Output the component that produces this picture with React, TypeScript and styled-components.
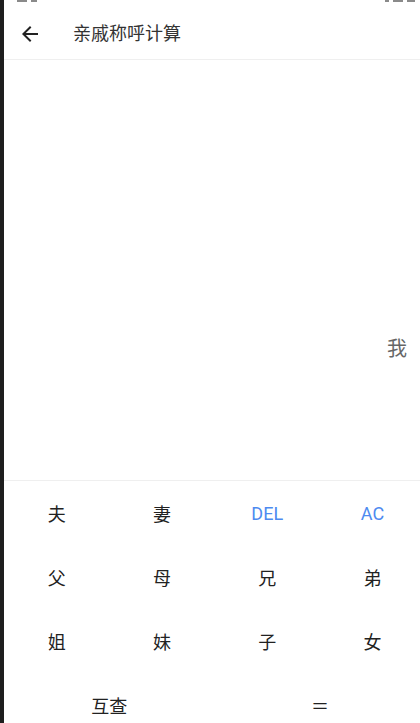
import React from "react";
import styled, { createGlobalStyle } from "styled-components";

const GlobalStyle = createGlobalStyle`
    html, body {
        margin: 0;
        padding: 0;
        background: #1e1e1e;
        overflow: hidden;
    }
    body {
        font-family: Roboto, "Noto Sans CJK SC", sans-serif;
    }
`;

const Shell = styled.div`
    display: flex;
    height: 723px;
    width: 420px;
    overflow: hidden;
`;

const Edge = styled.div`
    flex: 0 0 4px;
    background: #1e1e1e;
`;

const Screen = styled.div`
    flex: 1;
    display: flex;
    flex-direction: column;
    background: #fff;
    min-width: 0;
    overflow: hidden;
`;

const StatusBar = styled.div`
    flex-shrink: 0;
    height: 8px;
    display: flex;
    justify-content: space-between;
    align-items: flex-start;
    padding: 0 5px 0 13px;
`;

const StatusBits = styled.div`
    display: flex;
    gap: 4px;
`;

const Bit = styled.span<{ $w: number }>`
    display: block;
    width: ${(p) => p.$w}px;
    height: 2px;
    background: #8a8a8a;
`;

const Header = styled.div`
    flex-shrink: 0;
    height: 51px;
    display: flex;
    align-items: center;
    padding-left: 14px;
    border-bottom: 1px solid #efefef;
    color: #333;
`;

const BackButton = styled.button`
    width: 24px;
    height: 24px;
    padding: 0;
    border: none;
    background: none;
    display: flex;
    align-items: center;
    justify-content: center;
    color: #222;
`;

const Title = styled.h1`
    margin: 0 0 0 31px;
    font-size: 18px;
    font-weight: 400;
    line-height: 1;
    color: #333;
`;

const Display = styled.div`
    flex-shrink: 0;
    height: 421px;
    display: flex;
    flex-direction: column;
    justify-content: flex-end;
    align-items: flex-end;
    padding: 0 13px 119px 0;
    box-sizing: border-box;
    border-bottom: 1px solid #efefef;
`;

const Result = styled.div`
    font-size: 20px;
    line-height: 24px;
    color: #666;
`;

const Keypad = styled.div`
    flex-shrink: 0;
    display: grid;
    grid-template-columns: repeat(4, 105.3px);
    grid-auto-rows: 64px;
`;

const Key = styled.button<{ $accent?: boolean; $span?: number }>`
    grid-column: span ${(p) => p.$span ?? 1};
    border: none;
    background: none;
    padding: 0;
    font-family: Roboto, "Noto Sans CJK SC", sans-serif;
    font-size: 18px;
    color: ${(p) => (p.$accent ? "#4d8af0" : "#222")};
    display: flex;
    align-items: center;
    justify-content: center;
`;

const keys: { label: string; accent?: boolean; span?: number }[] = [
    { label: "夫" },
    { label: "妻" },
    { label: "DEL", accent: true },
    { label: "AC", accent: true },
    { label: "父" },
    { label: "母" },
    { label: "兄" },
    { label: "弟" },
    { label: "姐" },
    { label: "妹" },
    { label: "子" },
    { label: "女" },
    { label: "互查", span: 2 },
    { label: "＝", span: 2 },
];

const ArrowBack = () => (
    <svg width="24" height="24" viewBox="0 0 24 24" fill="currentColor">
        <path d="M20 11H7.83l5.59-5.59L12 4l-8 8 8 8 1.41-1.41L7.83 13H20v-2z" />
    </svg>
);

export default function App() {
    return (
        <>
            <GlobalStyle />
            <Shell>
                <Edge />
                <Screen>
                    <StatusBar>
                        <StatusBits>
                            <Bit $w={10} />
                            <Bit $w={6} />
                        </StatusBits>
                        <StatusBits>
                            <Bit $w={4} />
                            <Bit $w={10} />
                            <Bit $w={8} />
                        </StatusBits>
                    </StatusBar>
                    <Header>
                        <BackButton aria-label="返回">
                            <ArrowBack />
                        </BackButton>
                        <Title>亲戚称呼计算</Title>
                    </Header>
                    <Display>
                        <Result>我</Result>
                    </Display>
                    <Keypad>
                        {keys.map((k) => (
                            <Key key={k.label} $accent={k.accent} $span={k.span}>
                                {k.label}
                            </Key>
                        ))}
                    </Keypad>
                </Screen>
            </Shell>
        </>
    );
}
